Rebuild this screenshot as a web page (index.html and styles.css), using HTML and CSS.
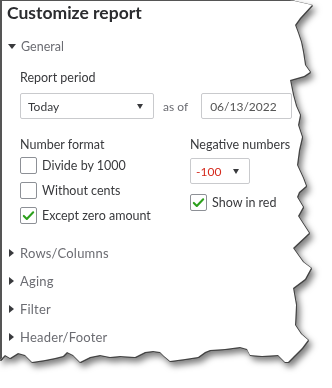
FILE: index.html
```html
<!DOCTYPE html>
<html lang="en">
<head>
  <meta charset="UTF-8" />
  <title>Customize report</title>
  <link rel="stylesheet" href="styles.css">
</head>
<body>
  <div class="paper">
    <div class="panel">
      <h1 class="title">Customize report</h1>

      <div class="section open">
        <span class="caret down"></span>General
      </div>

      <div class="general">
        <div class="label">Report period</div>
        <div class="period-row">
          <div class="select wide"><span>Today</span><span class="arrow"></span></div>
          <span class="asof">as of</span>
          <div class="input">06/13/2022</div>
        </div>

        <div class="format-grid">
          <div class="col">
            <div class="label">Number format</div>
            <label class="check"><span class="box"></span>Divide by 1000</label>
            <label class="check"><span class="box"></span>Without cents</label>
            <label class="check"><span class="box on"><svg viewBox="0 0 16 16"><path d="M3 8.5l3.2 3.2L13 4.5" /></svg></span>Except zero amount</label>
          </div>
          <div class="col">
            <div class="label">Negative numbers</div>
            <div class="select small"><span class="neg">-100</span><span class="arrow"></span></div>
            <label class="check red"><span class="box on"><svg viewBox="0 0 16 16"><path d="M3 8.5l3.2 3.2L13 4.5" /></svg></span>Show in red</label>
          </div>
        </div>
      </div>

      <div class="section"><span class="caret right"></span>Rows/Columns</div>
      <div class="section"><span class="caret right"></span>Aging</div>
      <div class="section"><span class="caret right"></span>Filter</div>
      <div class="section"><span class="caret right"></span>Header/Footer</div>
    </div>
  </div>
</body>
</html>
```

FILE: styles.css
```css
html, body {
  margin: 0;
  padding: 0;
  background: #fff;
  font-family: Lato, 'Liberation Sans', sans-serif;
  color: #393a3d;
}

.paper {
  width: 332px;
  height: 388px;
  filter:
    drop-shadow(1px 0 0 #444)
    drop-shadow(0 1px 0 #444)
    drop-shadow(3px 4px 3px rgba(0, 0, 0, 0.5));
}

.panel {
  box-sizing: border-box;
  width: 312px;
  height: 364px;
  background: #fff;
  border-left: 2px solid #555;
  border-top: 1px solid #555;
  padding: 2px 0 0 5px;
  clip-path: polygon(
    0 0, 290px 0, 312px 5px, 300px 18px, 295px 25px, 298px 33px, 301px 42px,
    303px 52px, 305px 65px, 310px 72px, 304px 76px, 290px 80px, 293px 95px,
    296px 106px, 300px 115px, 298px 125px, 302px 137px, 299px 150px,
    297px 165px, 303px 178px, 306px 186px, 299px 192px, 297px 197px,
    303px 207px, 298px 216px, 309px 233px, 293px 248px, 303px 262px,
    311px 268px, 305px 279px, 293px 288px, 296px 305px, 295px 325px,
    301px 334px, 308px 340px, 302px 348px, 295px 355px, 288px 362px,
    285px 362px, 278px 355px, 262px 356px, 250px 355px, 247px 349px,
    240px 347px, 225px 349px, 210px 350px, 205px 352px, 198px 357px,
    185px 359px, 170px 361px, 164px 356px, 160px 352px, 153px 351px,
    145px 352px, 135px 357px, 120px 356px, 110px 357px, 100px 355px,
    90px 357px, 80px 362px, 73px 355px, 67px 352px, 63px 356px, 55px 358px,
    45px 360px, 32px 362px, 25px 355px, 18px 353px, 10px 358px, 5px 355px,
    0 360px
  );
}

.title {
  margin: 0;
  font-size: 17.5px;
  line-height: 20px;
  font-weight: 700;
  color: #2b2c2f;
}

.section {
  display: flex;
  align-items: center;
  height: 18px;
  margin-top: 10px;
  font-size: 13px;
  letter-spacing: 0.2px;
  color: #6b6c72;
}

.section.open {
  margin-top: 14px;
  font-size: 12.5px;
  letter-spacing: 0;
}

.caret {
  width: 0;
  height: 0;
  margin-right: 6px;
}

.caret.down {
  border-left: 4px solid transparent;
  border-right: 4px solid transparent;
  border-top: 5px solid #393a3d;
  margin-left: 1px;
  margin-right: 5px;
}

.caret.right {
  border-top: 4px solid transparent;
  border-bottom: 4px solid transparent;
  border-left: 5px solid #393a3d;
  margin-left: 2px;
}

.general {
  padding: 14px 0 10px 13px;
}

.label {
  font-size: 12.5px;
  line-height: 18px;
  color: #393a3d;
}

.period-row {
  display: flex;
  align-items: center;
  margin-top: 6px;
  font-size: 12px;
}

.select, .input {
  box-sizing: border-box;
  display: flex;
  align-items: center;
  height: 26px;
  border: 1px solid #c9cacd;
  border-radius: 2px;
  font-size: 12px;
  color: #393a3d;
}

.select {
  justify-content: space-between;
  padding: 0 10px 0 7px;
}

.select.wide {
  width: 134px;
}

.select.small {
  width: 60px;
  margin-top: 4px;
  padding-left: 5px;
}

.arrow {
  width: 0;
  height: 0;
  border-left: 3.5px solid transparent;
  border-right: 3.5px solid transparent;
  border-top: 5px solid #393a3d;
}

.asof {
  margin: 0 13px 0 9px;
  color: #6b6c72;
}

.input {
  width: 91px;
  padding-left: 8px;
  color: #555;
}

.format-grid {
  display: grid;
  grid-template-columns: 170px 1fr;
  margin-top: 17px;
}

.col {
  display: flex;
  flex-direction: column;
  align-items: flex-start;
}

.check {
  display: flex;
  align-items: center;
  height: 17px;
  margin-top: 8px;
  font-size: 12.5px;
  color: #393a3d;
}

.col .label + .check {
  margin-top: 3px;
}

.check.red {
  margin-top: 10px;
}

.box {
  box-sizing: border-box;
  width: 17px;
  height: 17px;
  margin-right: 5px;
  border: 1px solid #8d9096;
  border-radius: 2px;
  background: #fff;
}

.box svg {
  display: block;
  width: 15px;
  height: 15px;
}

.box svg path {
  fill: none;
  stroke: #2ca01c;
  stroke-width: 2.2;
  stroke-linecap: round;
  stroke-linejoin: round;
}

.neg {
  color: #d52b1e;
}
```
